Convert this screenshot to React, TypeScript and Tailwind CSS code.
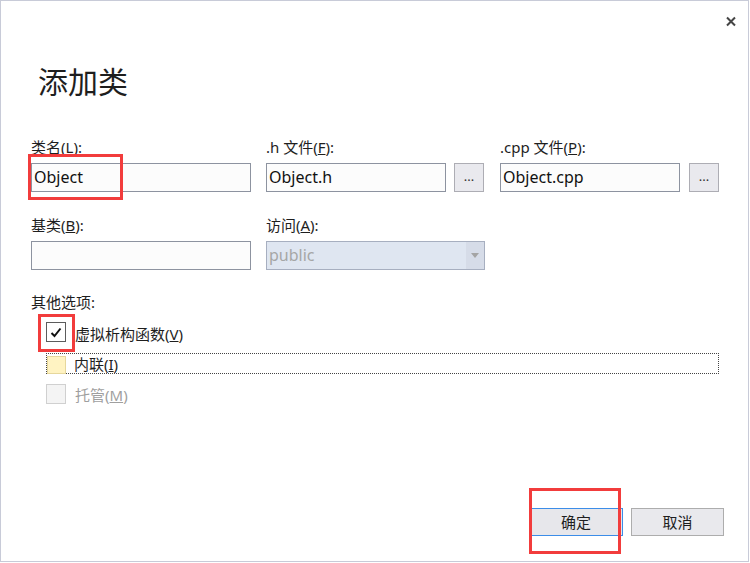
import React from 'react';

const font = { fontFamily: '"Noto Sans", "Noto Sans CJK SC", sans-serif' };

const Label = ({ children }: { children: React.ReactNode }) => (
  <div className="h-[20px] text-[15px] leading-[20px] text-[#1e1e1e]">{children}</div>
);

const TextBox = ({ value, w }: { value: string; w: string }) => (
  <div className={`${w} h-[29px] border border-[#8d93a0] bg-[#fcfcfc] px-[2px] text-[16px] leading-[27px] text-[#111]`}>
    {value}
  </div>
);

const Browse = () => (
  <div className="w-[30px] h-[29px] border border-[#adadb4] bg-[#e9e9ee] flex items-center justify-center text-[13px] leading-none text-[#333] pb-[2px]">
    ...
  </div>
);

const AddClassDialog = () => {
  return (
    <div
      className="relative w-[749px] h-[562px] border border-[#c8cbd8] bg-white flex flex-col"
      style={font}
    >
      {/* close */}
      <svg className="absolute left-[724px] top-[15px]" width="12" height="11" viewBox="0 0 12 11">
        <path d="M2 1.5 L10 9.5 M10 1.5 L2 9.5" stroke="#454545" strokeWidth="2" />
      </svg>

      <h1 className="ml-[37px] mt-[61px] h-[40px] text-[30px] leading-[40px] text-[#1e1e1e] font-normal">添加类</h1>

      {/* fields */}
      <div className="mt-[35px] flex pl-[30px]">
        <div className="w-[235px] flex flex-col">
          <Label>类名(<u>L</u>):</Label>
          <div className="mt-[6px]">
            <TextBox value="Object" w="w-[220px]" />
          </div>
          <div className="mt-[23px]">
            <Label>基类(<u>B</u>):</Label>
          </div>
          <div className="mt-[6px]">
            <TextBox value="" w="w-[220px]" />
          </div>
        </div>
        <div className="w-[234px] flex flex-col">
          <Label>.h 文件(<u>F</u>):</Label>
          <div className="mt-[6px] flex gap-[8px]">
            <TextBox value="Object.h" w="w-[180px]" />
            <Browse />
          </div>
          <div className="mt-[23px]">
            <Label>访问(<u>A</u>):</Label>
          </div>
          <div className="mt-[6px] w-[219px] h-[29px] border border-[#a7afc0] bg-[#dfe6f1] flex">
            <div className="flex-1 px-[2px] text-[16px] leading-[27px] text-[#a6a6a6]">public</div>
            <div className="w-[18px] bg-[#d6dce8] flex items-center justify-center">
              <svg width="8" height="5" viewBox="0 0 8 5">
                <path d="M0 0 H8 L4 5 Z" fill="#a4a4a4" />
              </svg>
            </div>
          </div>
        </div>
        <div className="flex flex-col">
          <Label>.cpp 文件(<u>P</u>):</Label>
          <div className="mt-[6px] flex gap-[9px]">
            <TextBox value="Object.cpp" w="w-[180px]" />
            <Browse />
          </div>
        </div>
      </div>

      {/* options */}
      <div className="mt-[22px] pl-[30px]">
        <Label>其他选项:</Label>
      </div>
      <div className="mt-[10px] pl-[45px] h-[20px] flex items-center gap-[9px]">
        <div className="w-[20px] h-[20px] border border-[#5c5c5c] bg-white flex items-center justify-center">
          <svg width="12" height="11" viewBox="0 0 12 11">
            <path d="M1.5 6 L4.5 9 L10.5 1.5" stroke="#111" strokeWidth="2" fill="none" />
          </svg>
        </div>
        <span className="text-[15px] leading-[20px] text-[#1e1e1e] mt-[3px]">
          虚拟析构函数(<u>V</u>)
        </span>
      </div>
      <div className="mt-[11px] ml-[45px] w-[673px] h-[21px] border border-dotted border-[#444] flex items-center gap-[8px]">
        <div className="w-[19px] h-[18px] mt-[2px] border border-[#e6d79c] bg-[#fff3c2]" />
        <span className="text-[15px] leading-[20px] text-[#1e1e1e]">
          内联(<u>I</u>)
        </span>
      </div>
      <div className="mt-[10px] pl-[45px] h-[20px] flex items-center gap-[9px]">
        <div className="w-[20px] h-[20px] border border-[#d0d0d0] bg-[#f4f4f4]" />
        <span className="text-[15px] leading-[20px] text-[#9f9f9f] mt-[2px]">
          托管(<u>M</u>)
        </span>
      </div>

      {/* footer buttons */}
      <div className="mt-auto mb-[25px] pr-[24px] flex justify-end gap-[8px]">
        <button className="w-[94px] h-[28px] border border-[#3c8de8] bg-[#e7e7eb] text-[15px] text-[#1e1e1e]">
          确定
        </button>
        <button className="w-[93px] h-[28px] border border-[#adadad] bg-[#e9e9ed] text-[15px] text-[#1e1e1e]">
          取消
        </button>
      </div>

      {/* red annotation boxes */}
      <div className="absolute left-[27px] top-[153px] w-[95px] h-[46px] border-[3px] border-[#f23c3c]" />
      <div className="absolute left-[37px] top-[313px] w-[37px] h-[38px] border-[3px] border-[#f23c3c]" />
      <div className="absolute left-[528px] top-[487px] w-[92px] h-[66px] border-[3px] border-[#f23c3c]" />
    </div>
  );
};

export default function App() {
  return <AddClassDialog />;
}
